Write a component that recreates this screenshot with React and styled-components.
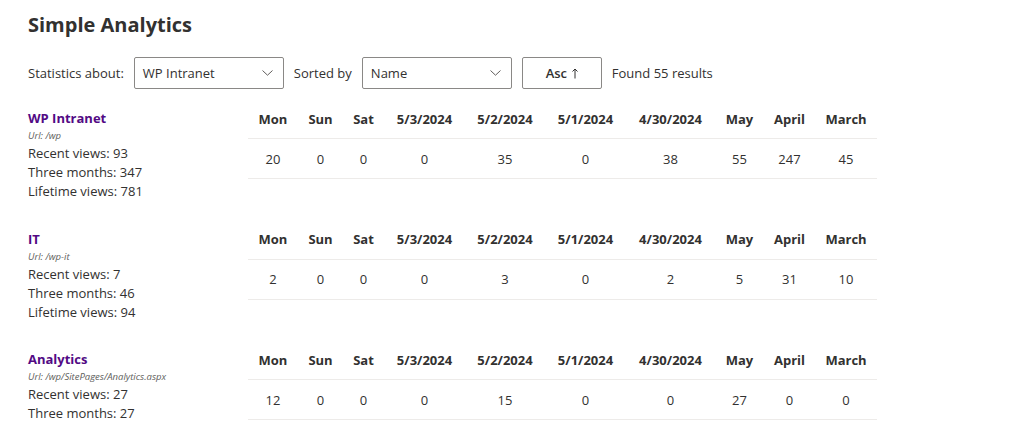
import styled, { createGlobalStyle } from "styled-components"

const columns = [
  { label: "Mon", width: 50 },
  { label: "Sun", width: 45 },
  { label: "Sat", width: 41 },
  { label: "5/3/2024", width: 81 },
  { label: "5/2/2024", width: 80 },
  { label: "5/1/2024", width: 81 },
  { label: "4/30/2024", width: 89 },
  { label: "May", width: 49 },
  { label: "April", width: 51 },
  { label: "March", width: 62 },
]

const sites = [
  {
    name: "WP Intranet",
    url: "/wp",
    recent: 93,
    three: 347,
    lifetime: 781,
    values: [20, 0, 0, 0, 35, 0, 38, 55, 247, 45],
  },
  {
    name: "IT",
    url: "/wp-it",
    recent: 7,
    three: 46,
    lifetime: 94,
    values: [2, 0, 0, 0, 3, 0, 2, 5, 31, 10],
  },
  {
    name: "Analytics",
    url: "/wp/SitePages/Analytics.aspx",
    recent: 27,
    three: 27,
    lifetime: 27,
    values: [12, 0, 0, 0, 15, 0, 0, 27, 0, 0],
  },
]

function Chevron() {
  return (
    <svg width="11" height="6" viewBox="0 0 11 6" fill="none">
      <path d="M0.5 0.5 L5.5 5.2 L10.5 0.5" stroke="#605e5c" strokeWidth="1" />
    </svg>
  )
}

function UpArrow() {
  return (
    <svg width="6" height="11" viewBox="0 0 6 11" fill="none">
      <path d="M3 10.5 V1 M0.5 3.5 L3 1 L5.5 3.5" stroke="#323130" strokeWidth="1" />
    </svg>
  )
}

function App() {
  return (
    <>
      <GlobalStyle />
      <Page>
        <Title>Simple Analytics</Title>
        <Toolbar>
          <Label>Statistics about:</Label>
          <Select>
            <span>WP Intranet</span>
            <Chevron />
          </Select>
          <Label>Sorted by</Label>
          <Select>
            <span>Name</span>
            <Chevron />
          </Select>
          <Button>
            Asc <UpArrow />
          </Button>
          <Label>Found 55 results</Label>
        </Toolbar>
        <List>
          {sites.map((site) => (
            <Item key={site.name}>
              <Info>
                <Name>{site.name}</Name>
                <Url>Url: {site.url}</Url>
                <Stat>Recent views: {site.recent}</Stat>
                <Stat>Three months: {site.three}</Stat>
                <Stat>Lifetime views: {site.lifetime}</Stat>
              </Info>
              <Table>
                <colgroup>
                  {columns.map((c) => (
                    <Col key={c.label} $w={c.width} />
                  ))}
                </colgroup>
                <thead>
                  <tr>
                    {columns.map((c) => (
                      <Th key={c.label}>{c.label}</Th>
                    ))}
                  </tr>
                </thead>
                <tbody>
                  <tr>
                    {site.values.map((v, i) => (
                      <Td key={i}>{v}</Td>
                    ))}
                  </tr>
                </tbody>
              </Table>
            </Item>
          ))}
        </List>
      </Page>
    </>
  )
}

const GlobalStyle = createGlobalStyle`
  body {
    margin: 0;
    background: #fff;
    color: #323130;
    font-family: "Segoe UI", "Open Sans", "Noto Sans", sans-serif;
    font-size: 13px;
  }
`

const Page = styled.div`
  padding: 10px 28px;
  height: 424px;
  box-sizing: border-box;
  overflow: hidden;
`

const Title = styled.h1`
  margin: 0;
  font-size: 20px;
  line-height: 30px;
  font-weight: 700;
  color: #323130;
`

const Toolbar = styled.div`
  margin-top: 17px;
  display: flex;
  align-items: center;
  gap: 10px;
  height: 32px;
`

const Label = styled.span`
  font-size: 13px;
  white-space: nowrap;
`

const Select = styled.div`
  box-sizing: border-box;
  width: 150px;
  height: 32px;
  border: 1px solid #8a8886;
  border-radius: 2px;
  display: flex;
  align-items: center;
  justify-content: space-between;
  padding: 0 10px 0 8px;
  font-size: 13px;
`

const Button = styled.div`
  box-sizing: border-box;
  width: 80px;
  height: 32px;
  border: 1px solid #8a8886;
  border-radius: 2px;
  display: flex;
  align-items: center;
  justify-content: center;
  gap: 5px;
  font-size: 13px;
  font-weight: 600;
`

const List = styled.div`
  margin-top: 10px;
`

const Item = styled.div`
  display: flex;
  align-items: flex-start;
  min-height: 120.5px;
`

const Info = styled.div`
  width: 220px;
  flex: none;
  padding-top: 9px;
`

const Name = styled.div`
  font-size: 13px;
  line-height: 20px;
  font-weight: 700;
  color: #520a84;
`

const Url = styled.div`
  font-size: 9.5px;
  line-height: 16px;
  font-style: italic;
  color: #605e5c;
`

const Stat = styled.div`
  font-size: 13px;
  line-height: 19px;
`

const Table = styled.table`
  border-collapse: collapse;
  table-layout: fixed;
  width: 629px;
`

const Col = styled.col`
  width: ${(p) => p.$w}px;
`

const Th = styled.th`
  height: 39px;
  padding: 0;
  text-align: center;
  font-size: 13px;
  font-weight: 700;
  border-bottom: 1px solid #edebe9;
  white-space: nowrap;
`

const Td = styled.td`
  height: 39px;
  padding: 0;
  text-align: center;
  font-size: 13px;
  border-bottom: 1px solid #edebe9;
`

export default App
